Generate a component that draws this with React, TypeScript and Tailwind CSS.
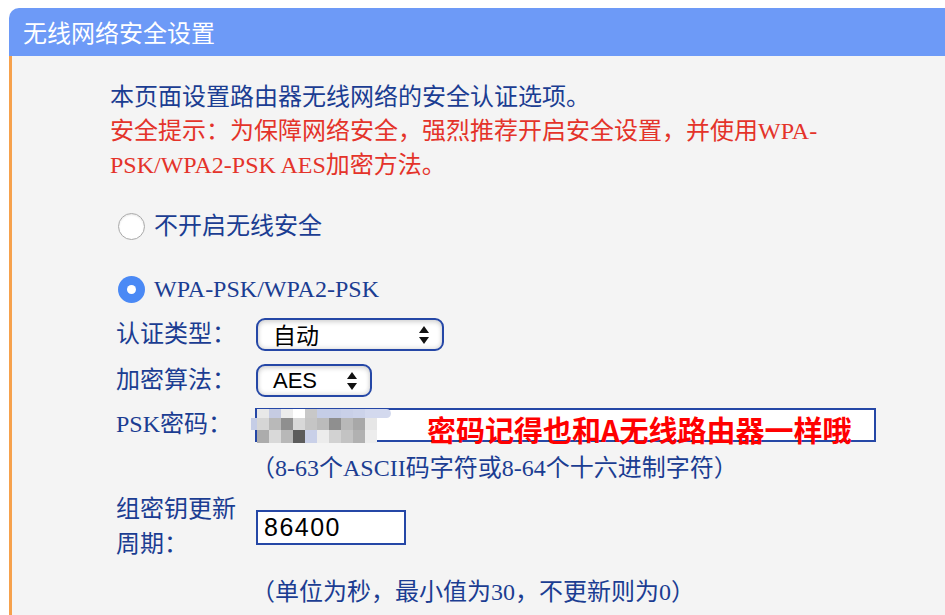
import React from "react";

const serif = "font-['Liberation_Serif','Noto_Sans_CJK_SC',serif]";

const mosaic: string[][] = [
  ["bg-[#e8e8e8]", "bg-[#c6cce3]", "bg-[#ececec]", "bg-[#ffffff]", "bg-[#c8c8c8]", "bg-[#c5cde6]", "bg-[#c5cde6]", "bg-[#c9d0e8]", "bg-[#ccd3ea]", "bg-[#d3d9ee]"],
  ["bg-[#d6d6d6]", "bg-[#b9b9b9]", "bg-[#8f8f8f]", "bg-[#d8d8d8]", "bg-[#c5c5c5]", "bg-[#bbbbbb]", "bg-[#8f8f8f]", "bg-[#b8b8b8]", "bg-[#a8a8a8]", "bg-[#e6e6e6]"],
  ["bg-[#acacac]", "bg-[#d9d9d9]", "bg-[#b8b8b8]", "bg-[#5c5c5c]", "bg-[#c9d0e8]", "bg-[#ececec]", "bg-[#d2d2d2]", "bg-[#c3c3c3]", "bg-[#b1b1b1]", "bg-[#ededed]"],
];

const Arrows: React.FC = () => (
  <svg width="12" height="20" viewBox="0 0 12 20" className="shrink-0">
    <path d="M6 1 L11 8 L1 8 Z" fill="#111" />
    <path d="M1 12 L11 12 L6 19 Z" fill="#111" />
  </svg>
);

const Select: React.FC<{ value: string; width: string; cjk?: boolean }> = ({ value, width, cjk }) => (
  <div
    className={`${width} h-[33px] flex items-center justify-between pl-[15px] pr-[12px] rounded-[9px] border-2 border-[#2547a6] bg-white shadow-[inset_0_2px_5px_rgba(0,0,0,0.18),inset_0_-2px_4px_rgba(0,0,0,0.08)]`}
  >
    <span
      className={`${cjk ? "font-['Noto_Sans_CJK_SC',sans-serif] text-[23px]" : "font-['Liberation_Sans',sans-serif] text-[22px]"} leading-none text-black`}
    >
      {value}
    </span>
    <Arrows />
  </div>
);

const Row: React.FC<{ label: React.ReactNode; children: React.ReactNode; className?: string }> = ({ label, children, className }) => (
  <div className={`flex items-center ${className ?? ""}`}>
    <div className="w-[146px] shrink-0 pl-[6px] leading-[35px]">{label}</div>
    <div>{children}</div>
  </div>
);

export default function App() {
  return (
    <div className={`min-h-screen bg-white pt-2 pl-[9px] ${serif}`}>
      <div className="h-12 bg-[#6d9af7] rounded-tl-[10px] flex items-center pl-[14px]">
        <span className="font-['Noto_Sans_CJK_SC',sans-serif] text-[24px] leading-none text-white">
          无线网络安全设置
        </span>
      </div>
      <div className="border-l-[3px] border-[#f6a14c] bg-[#f4f4f4] pl-[98px] pt-[24px] pb-[40px] text-[24px] leading-[33px] text-[#1b3d92]">
        <div className="max-w-[728px] leading-[34px]">
          <p>本页面设置路由器无线网络的安全认证选项。</p>
          <p className="text-[#e4332a]">
            安全提示：为保障网络安全，强烈推荐开启安全设置，并使用WPA-PSK/WPA2-PSK AES加密方法。
          </p>
        </div>

        <div className="mt-[28px] flex items-center h-[33px] pl-[8px]">
          <span className="w-[27px] h-[27px] rounded-full border border-[#a9a9a9] bg-white shadow-[inset_0_1px_2px_rgba(0,0,0,0.1)]" />
          <span className="ml-[9px]">不开启无线安全</span>
        </div>
        <div className="mt-[30px] flex items-center h-[33px] pl-[8px]">
          <span className="w-[27px] h-[27px] rounded-full bg-[#4a89f5] flex items-center justify-center">
            <span className="w-[9px] h-[9px] rounded-full bg-white" />
          </span>
          <span className="ml-[9px]">WPA-PSK/WPA2-PSK</span>
        </div>

        <Row label="认证类型：" className="mt-[11px]">
          <Select value="自动" width="w-[188px]" cjk />
        </Row>
        <Row label="加密算法：" className="mt-[11px]">
          <Select value="AES" width="w-[116px]" />
        </Row>
        <Row label="PSK密码：" className="mt-[9px]">
          <div className="relative -ml-px w-[621px] h-[34px] border-2 border-[#2547a6] bg-white">
            <div className="absolute -left-[6px] -top-[1px] flex flex-col">
              <div className="flex pl-[6px] h-[9px]">
                {mosaic[0].map((c, i) => (
                  <div key={i} className={`w-[12px] h-full ${c}`} />
                ))}
                <div className="w-[14px] h-full bg-[#d3d9ee] rounded-r-full" />
              </div>
              <div className="flex h-[12px]">
                <div className="w-[6px] h-full bg-[#c5cde6]" />
                {mosaic[1].map((c, i) => (
                  <div key={i} className={`w-[12px] h-full ${c}`} />
                ))}
              </div>
              <div className="flex pl-[6px] h-[13px]">
                {mosaic[2].map((c, i) => (
                  <div key={i} className={`w-[12px] h-full ${c}`} />
                ))}
              </div>
            </div>
            <span className="absolute left-[170px] top-[5px] font-['Noto_Sans_CJK_SC',sans-serif] font-semibold text-[29px] leading-none text-[#ff0000] whitespace-nowrap">
              密码记得也和A无线路由器一样哦
            </span>
          </div>
        </Row>
        <div className="mt-[10px] pl-[141px]">（8-63个ASCII码字符或8-64个十六进制字符）</div>

        <Row label={<>组密钥更新<br />周期：</>} className="mt-[7px]">
          <div className="w-[150px] h-[35px] border-2 border-[#2547a6] bg-white flex items-center pl-[6px]">
            <span className="font-['Liberation_Sans',sans-serif] text-[25px] tracking-[1.5px] leading-none text-black">
              86400
            </span>
          </div>
        </Row>
        <div className="mt-[14px] pl-[141px]">（单位为秒，最小值为30，不更新则为0）</div>
      </div>
    </div>
  );
}
